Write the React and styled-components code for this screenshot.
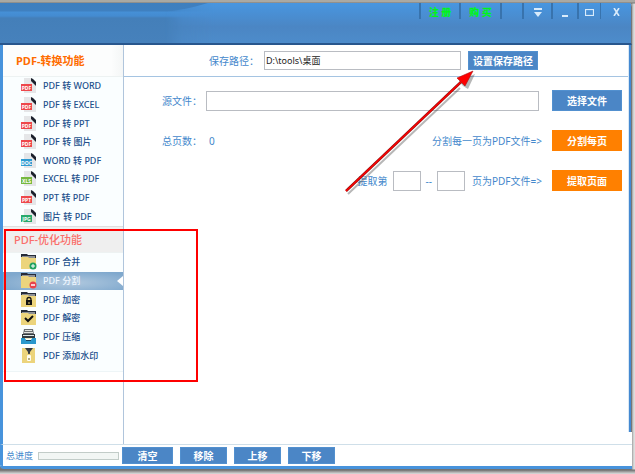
import React, { useState } from "react";
import styled, { createGlobalStyle } from "styled-components";

const GlobalStyle = createGlobalStyle`
  * { box-sizing: border-box; }
  body {
    margin: 0;
    background: #d2d2d2;
    font-family: "Noto Sans", "Noto Sans CJK SC", sans-serif;
    font-size: 10px;
    line-height: 16px;
    color: #4488cc;
  }
  button, input { font: inherit; }
`;

const Desktop = styled.div`
  position: relative;
  display: flex;
  min-height: 100vh;
  padding: 0 3px 5px 0;
  background: linear-gradient(#aaa9a3 0 2px, #777 3px, transparent 4px),
    linear-gradient(transparent calc(100% - 5px), #6f6f6f calc(100% - 4px), #aaa calc(100% - 2px), #dedede 100%),
    linear-gradient(90deg, #777 calc(100% - 4px), #999 calc(100% - 3px), #c8c8c8 calc(100% - 2px), #e4e4e4 100%);
`;

const Window = styled.div`
  flex: 1;
  display: flex;
  flex-direction: column;
  margin-top: 3px;
  border-bottom: 3px solid #4793dc;
  border-radius: 0 4px 0 4px;
  background: #fff;
  overflow: hidden;
`;

const TitleBar = styled.header`
  display: flex;
  justify-content: flex-end;
  height: 42px;
  border-right: 1px solid #777;
  border-bottom: 2px solid #28568d;
  background: linear-gradient(#3f7fbe 0, #3f80c0 8px, #4690d6 9px, #448bd0 13px, #447fb9 15px, #4681bc 40px);
`;

const TitleArt = styled.svg`
  flex: 1;
  min-width: 0;
  height: 40px;
`;

const TitleControls = styled.div`
  display: flex;
  align-items: flex-start;
  background: linear-gradient(#4896e0, #4b86c4 24px, #4d8ccb);
`;

const TitleButton = styled.button`
  display: flex;
  align-items: center;
  justify-content: center;
  width: ${(p) => p.$width}px;
  height: 16px;
  padding: 2px 0 0;
  border: 0;
  border-left: ${(p) => (p.$last ? "1px" : "2px")} solid #3873ad;
  background: none;
  color: ${(p) => (p.$accent ? "#00f51b" : "#d9ebfb")};
  font-size: 10px;
  font-weight: 900;
  line-height: 14px;
`;

const TitleGap = styled.div`
  width: ${(p) => p.$width}px;
  height: 16px;
  border-left: 2px solid #3873ad;
`;

const Content = styled.div`
  flex: 1;
  display: flex;
  border-left: 3px solid #4793dc;
`;

const Sidebar = styled.nav`
  display: flex;
  flex-direction: column;
  width: 121px;
  border-right: 1px solid #b0c5dc;
`;

const GroupTitle = styled.h2`
  margin: 0;
  padding: ${(p) => (p.$active ? "0 0 0 13px" : "4px 0 0 11px")};
  height: ${(p) => (p.$active ? "32px" : "27px")};
  border-bottom: 1px solid #edf2f2;
  border-top: ${(p) => (p.$active ? "0" : "1px solid #dfdfdf")};
  background: ${(p) => (p.$active ? "linear-gradient(90deg, #fcfdfd 90%, #f4f6f6)" : "#efefef")};
  color: ${(p) => (p.$active ? "#ff6c00" : "#fa6e6a")};
  font-size: 11px;
  font-weight: ${(p) => (p.$active ? 700 : 500)};
  line-height: ${(p) => (p.$active ? "32px" : "18px")};
`;

const ItemList = styled.ul`
  display: grid;
  grid-auto-rows: 1fr;
  height: ${(p) => p.$height}px;
  margin: 0;
  padding: 0;
  list-style: none;
  background: #fafeff;
`;

const ListEnd = styled.div`
  height: 7px;
  border-bottom: 1px solid #eef5f7;
  background: #fafeff;
`;

const Item = styled.button`
  display: flex;
  align-items: center;
  gap: 6px;
  width: 100%;
  height: 100%;
  padding: 0 0 0 18px;
  border: 0;
  background: ${(p) =>
    p.$selected ? "radial-gradient(ellipse at 55% 60%, #b1c9df, #7fa8cd 80%)" : "transparent"};
  color: ${(p) => (p.$selected ? "#eef6ff" : "#23508c")};
  font-size: 9px;
  font-weight: 500;
  text-align: left;
  white-space: nowrap;

  svg { flex: none; }
`;

const ItemText = styled.span`
  flex: 1;
`;

const Main = styled.main`
  flex: 1;
  display: flex;
  flex-direction: column;
  min-width: 0;
`;

const RightEdge = styled.div`
  width: 4px;
  margin-bottom: 12px;
  background: linear-gradient(90deg, #d9e8f5 0 1px, #4489d2 1px 3px, #777 3px);
`;

const PathBar = styled.div`
  display: flex;
  align-items: center;
  gap: 7px;
  height: 32px;
  padding: 0 90px 0 85px;
  border-bottom: 1px solid #a5c4e2;
`;

const Form = styled.div`
  display: flex;
  flex-direction: column;
  gap: 19px;
  padding: 13px 6px 0 38px;
`;

const FormRow = styled.div`
  display: flex;
  align-items: center;
  height: 21px;
`;

const Label = styled.label`
  flex: none;
  width: ${(p) => p.$width || 44}px;
  white-space: nowrap;
`;

const Count = styled.output`
  padding-left: 3px;
`;

const Phrase = styled.span`
  margin-left: auto;
  margin-right: 10px;
  white-space: nowrap;
`;

const Extract = styled.div`
  display: flex;
  align-items: center;
  gap: 5px;
  margin-left: auto;
  margin-right: 10px;
  white-space: nowrap;
`;

const TextBox = styled.input`
  flex: 1;
  min-width: 0;
  height: ${(p) => p.$height || 20}px;
  margin-right: ${(p) => p.$gap || 0}px;
  padding: 0 1px;
  border: 1px solid #b9bcc2;
  outline: 0;
  background: #fff;
  color: #222;
  font-size: 9px;
`;

const PageBox = styled(TextBox)`
  flex: none;
  width: 28px;
`;

const PageText = styled.span`
  padding-left: 2px;
`;

const ActionButton = styled.button`
  flex: none;
  width: ${(p) => p.$width || 70}px;
  height: ${(p) => p.$height || 21}px;
  padding: 0;
  border: 1px solid ${(p) => (p.$orange ? "#ff8000" : "#5290cf")};
  background: ${(p) => (p.$orange ? "#ff8000" : "#4b86c6")};
  color: #fff;
  font-size: 10px;
  font-weight: 700;
  line-height: 16px;
  white-space: nowrap;
`;

const Footer = styled.footer`
  display: flex;
  align-items: center;
  gap: 7px;
  height: 22px;
  padding-left: 3px;
  border-left: 3px solid #4793dc;
  border-top: 1px solid #cfdfe9;
`;

const ProgressGroup = styled.div`
  display: flex;
  align-items: center;
  gap: 4px;
  margin-right: -4px;
`;

const ProgressLabel = styled.label`
  width: 28px;
  font-size: 9px;
  white-space: nowrap;
`;

const Progress = styled.progress`
  appearance: none;
  width: 81px;
  height: 8px;
  border: 1px solid #c2ccc8;
  background: #f2f6f4;

  &::-webkit-progress-bar { background: #f2f6f4; }
  &::-webkit-progress-value { background: #4b86c6; }
`;

const RegionMark = styled.div`
  position: absolute;
  left: 4px;
  top: 229px;
  width: 194px;
  height: 153px;
  border: 2px solid #fe0000;
  pointer-events: none;
`;

const ArrowMark = styled.svg`
  position: absolute;
  left: 340px;
  top: 66px;
  pointer-events: none;
`;

function FileIcon({ tag, color }) {
  return (
    <svg width="16" height="16" viewBox="0 0 16 16" aria-hidden="true">
      <path d="M3 0H10L15 5V15H3Z" fill="#e5e6e8" />
      <path d="M10 0L12 1L15 4V8L10 3Z" fill="#1b202c" />
      <rect x="0" y="6" width="11" height="7" fill={color} />
      <text x="5.5" y="11.5" fontSize="5" fontWeight="700" fill="#fff" textAnchor="middle">{tag}</text>
    </svg>
  );
}

function FolderIcon({ kind }) {
  if (kind === "press") {
    return (
      <svg width="16" height="16" viewBox="0 0 16 16" aria-hidden="true">
        <path d="M3 0H12L13 5H2Z" fill="#6b6f72" />
        <path d="M4 1.5H11M3 3.5H12" stroke="#e2e3df" />
        <rect x="1" y="5" width="13" height="5" fill="#343a3e" />
        <path d="M2 6.5H13" stroke="#dfe8e8" />
        <path d="M0 9H4L5 11H10L11 9H15V15H0Z" fill="#2b98cc" />
        <path d="M4 9.5H11" stroke="#eee9c2" />
        <path d="M5 11.5H10" stroke="#1b4460" />
      </svg>
    );
  }
  if (kind === "zip") {
    return (
      <svg width="16" height="16" viewBox="0 0 16 16" aria-hidden="true">
        <rect x="1" y="0" width="13" height="15" fill="#ecd47c" />
        <path d="M4 0H12L9 4V6H7V4Z" fill="#363b42" />
        <path d="M8 5V9" stroke="#6a6345" strokeDasharray="1 1" />
        <rect x="6" y="7" width="4" height="6" rx="1" fill="#fffef4" />
        <circle cx="8" cy="11" r="1" fill="#a2945c" />
      </svg>
    );
  }
  return (
    <svg width="16" height="16" viewBox="0 0 16 16" aria-hidden="true">
      <path d="M0 0H6L7 1H15V5H0Z" fill="#252b38" />
      <path d="M1 3H14" stroke="#f8f8f2" />
      <path d="M0 3H7L8 4H15V15H0Z" fill="#ecd47c" />
      {kind === "add" && (
        <g><circle cx="12" cy="12" r="3.5" fill="#1fa260" /><path d="M12 10V14M10 12H14" stroke="#fff" /></g>
      )}
      {kind === "split" && (
        <g><circle cx="12" cy="12" r="3.5" fill="#e8424c" /><path d="M10 12H14" stroke="#fff" strokeWidth="1.3" /></g>
      )}
      {kind === "lock" && (
        <g>
          <path d="M6 9V7.5A2 2 0 0 1 10 7.5V9" fill="none" stroke="#111" strokeWidth="1.3" />
          <rect x="5" y="8" width="6" height="5" fill="#111" />
          <path d="M8 10V12" stroke="#ecd47c" />
        </g>
      )}
      {kind === "check" && <path d="M4 8L7 11L12 6" fill="none" stroke="#111" strokeWidth="2" />}
    </svg>
  );
}

const conversions = [
  ["PDF 转 WORD", "PDF", "#ee474b"],
  ["PDF 转 EXCEL", "PDF", "#ee474b"],
  ["PDF 转 PPT", "PDF", "#ee474b"],
  ["PDF 转 图片", "PDF", "#ee474b"],
  ["WORD 转 PDF", "DOC", "#2f9bd1"],
  ["EXCEL 转 PDF", "XLS", "#76b93f"],
  ["PPT 转 PDF", "PPT", "#ee474b"],
  ["图片 转 PDF", "JPG", "#28a96b"],
];

const tools = [
  ["PDF 合并", "add"],
  ["PDF 分割", "split"],
  ["PDF 加密", "lock"],
  ["PDF 解密", "check"],
  ["PDF 压缩", "press"],
  ["PDF 添加水印", "zip"],
];

export default function App() {
  const [selected, setSelected] = useState("PDF 分割");
  const [path, setPath] = useState("D:\\tools\\桌面");

  const pointer = (
    <svg width="6" height="10" viewBox="0 0 6 10" aria-hidden="true">
      <path d="M6 0V10L0 5Z" fill="#fff" />
    </svg>
  );

  return (
    <Desktop>
      <GlobalStyle />
      <Window>
        <TitleBar>
          <TitleArt viewBox="0 0 419 40" preserveAspectRatio="none" aria-hidden="true">
            <defs>
              <linearGradient id="sheen" gradientUnits="userSpaceOnUse" x1="0" y1="0" x2="0" y2="40">
                <stop offset="0" stopColor="#4896e0" />
                <stop offset="0.6" stopColor="#4b86c4" />
                <stop offset="1" stopColor="#4d8ccb" />
              </linearGradient>
              <linearGradient id="fade" gradientUnits="userSpaceOnUse" x1="165" y1="0" x2="215" y2="0">
                <stop offset="0" stopColor="#fff" stopOpacity="0" />
                <stop offset="0.35" stopColor="#fff" stopOpacity="0.7" />
                <stop offset="1" stopColor="#fff" />
              </linearGradient>
              <mask id="soft"><rect width="419" height="40" fill="url(#fade)" /></mask>
            </defs>
            <path d="M160 9Q182 8 208 0H419V40H160Z" fill="url(#sheen)" mask="url(#soft)" />
          </TitleArt>
          <TitleControls>
            <TitleButton $width={40} $accent>注 册</TitleButton>
            <TitleButton $width={41} $accent>购 买</TitleButton>
            <TitleGap $width={22} />
            <TitleButton $width={29} aria-label="菜单">
              <svg width="10" height="9" viewBox="0 0 10 9"><path d="M1 1H9" stroke="currentColor" strokeWidth="2" /><path d="M1 4H9L5 9Z" fill="currentColor" /></svg>
            </TitleButton>
            <TitleButton $width={26} aria-label="最小化">
              <svg width="8" height="9" viewBox="0 0 8 9"><path d="M1 8H7" stroke="currentColor" strokeWidth="2" /></svg>
            </TitleButton>
            <TitleButton $width={23} aria-label="最大化">
              <svg width="9" height="7" viewBox="0 0 9 7"><rect x="0.5" y="0.5" width="8" height="6" fill="none" stroke="currentColor" strokeWidth="1.2" /></svg>
            </TitleButton>
            <TitleButton $width={31} $last aria-label="关闭">
              <svg width="7" height="8" viewBox="0 0 7 8"><path d="M1 0L6 8M6 0L1 8" stroke="currentColor" strokeWidth="1.6" /></svg>
            </TitleButton>
          </TitleControls>
        </TitleBar>

        <Content>
          <Sidebar>
            <GroupTitle $active>PDF-转换功能</GroupTitle>
            <ItemList $height={149}>
              {conversions.map(([name, tag, color]) => (
                <li key={name}>
                  <Item $selected={selected === name} onClick={() => setSelected(name)}>
                    <FileIcon tag={tag} color={color} />
                    <ItemText>{name}</ItemText>
                    {selected === name && pointer}
                  </Item>
                </li>
              ))}
            </ItemList>
            <GroupTitle>PDF-优化功能</GroupTitle>
            <ItemList $height={112}>
              {tools.map(([name, kind]) => (
                <li key={name}>
                  <Item $selected={selected === name} onClick={() => setSelected(name)}>
                    <FolderIcon kind={kind} />
                    <ItemText>{name}</ItemText>
                    {selected === name && pointer}
                  </Item>
                </li>
              ))}
            </ItemList>
            <ListEnd />
          </Sidebar>

          <Main>
            <PathBar>
              <Label htmlFor="save-path" $width={48}>保存路径：</Label>
              <TextBox id="save-path" $height={19} value={path} onChange={(e) => setPath(e.target.value)} />
              <ActionButton $height={19}>设置保存路径</ActionButton>
            </PathBar>
            <Form>
              <FormRow>
                <Label htmlFor="source-file">源文件：</Label>
                <TextBox id="source-file" $gap={13} />
                <ActionButton>选择文件</ActionButton>
              </FormRow>
              <FormRow>
                <Label htmlFor="page-count">总页数：</Label>
                <Count id="page-count">0</Count>
                <Phrase>分割每一页为PDF文件=&gt;</Phrase>
                <ActionButton $orange>分割每页</ActionButton>
              </FormRow>
              <FormRow>
                <Extract>
                  <label htmlFor="first-page">提取第</label>
                  <PageBox id="first-page" />
                  <label htmlFor="last-page">--</label>
                  <PageBox id="last-page" />
                  <PageText>页为PDF文件=&gt;</PageText>
                </Extract>
                <ActionButton $orange>提取页面</ActionButton>
              </FormRow>
            </Form>
          </Main>
          <RightEdge />
        </Content>

        <Footer>
          <ProgressGroup>
            <ProgressLabel htmlFor="progress">总进度</ProgressLabel>
            <Progress id="progress" value="0" max="100" />
          </ProgressGroup>
          <ActionButton $width={51} $height={17}>清空</ActionButton>
          <ActionButton $width={47} $height={17}>移除</ActionButton>
          <ActionButton $width={47} $height={17}>上移</ActionButton>
          <ActionButton $width={47} $height={17}>下移</ActionButton>
        </Footer>
      </Window>

      <RegionMark />
      <ArrowMark width="140" height="132" viewBox="0 0 140 132" aria-hidden="true">
        <g transform="translate(2 3)" opacity="0.35">
          <path d="M6 125L118 19" stroke="#333" strokeWidth="2" />
          <path d="M133 5L126 20L121 17L117 12Z" fill="#333" />
        </g>
        <path d="M6 125L121 16" stroke="#8c1111" strokeWidth="2.6" />
        <path d="M6 125L121 16" stroke="#fe0000" strokeWidth="1.6" />
        <path d="M133 5L125 20L121 16L117 12Z" fill="#fe0000" stroke="#a61212" strokeWidth="0.6" />
      </ArrowMark>
    </Desktop>
  );
}
